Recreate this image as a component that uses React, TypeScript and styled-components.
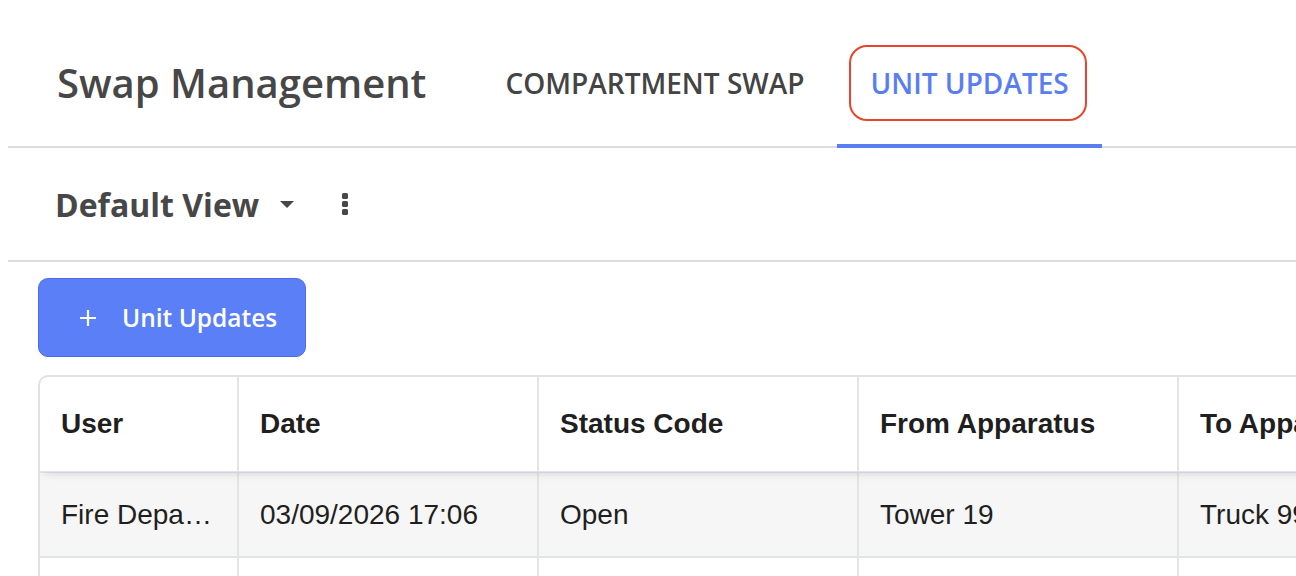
import React from 'react'
import styled, { createGlobalStyle } from 'styled-components'

const GlobalStyle = createGlobalStyle`
  html, body {
    margin: 0;
    padding: 0;
    background: #fff;
  }
  body {
    font-family: "Open Sans", "Liberation Sans", sans-serif;
    overflow: hidden;
  }
`

const Page = styled.main`
  width: 1296px;
  height: 576px;
  padding-left: 8px;
  box-sizing: border-box;
  overflow: hidden;
`

const Header = styled.header`
  display: flex;
  align-items: stretch;
  height: 146px;
  border-bottom: 2px solid #dcdcdc;
`

const Title = styled.h1`
  margin: 56px 46px 0 49px;
  align-self: flex-start;
  font-size: 40px;
  line-height: 1.362;
  font-weight: 600;
  color: #474747;
`

const Tabs = styled.nav`
  display: flex;
  align-items: stretch;
`

const Tab = styled.button<{ $active?: boolean }>`
  display: flex;
  align-items: flex-start;
  padding: 45px 15px 0 12px;
  margin-bottom: -2px;
  background: none;
  border: none;
  border-bottom: 4px solid ${(p) => (p.$active ? '#5a7ef2' : 'transparent')};
  font-family: inherit;
  font-size: 28px;
  font-weight: 600;
  color: ${(p) => (p.$active ? '#5a7ef2' : '#444')};
  cursor: pointer;
`

const TabLabel = styled.span<{ $focused?: boolean }>`
  display: flex;
  align-items: center;
  height: 72px;
  padding: 0 16px 0 19px;
  border: 2px solid ${(p) => (p.$focused ? '#e8442c' : 'transparent')};
  border-radius: 18px;
`

const ViewBar = styled.section`
  display: flex;
  align-items: center;
  height: 112px;
  padding-left: 47px;
  border-bottom: 2px solid #dcdcdc;
`

const ViewName = styled.button`
  display: flex;
  align-items: center;
  gap: 21px;
  background: none;
  border: none;
  padding: 0;
  font-family: inherit;
  font-size: 32px;
  font-weight: 700;
  color: #474747;
  cursor: pointer;
`

const IconButton = styled.button`
  display: flex;
  align-items: center;
  justify-content: center;
  margin-left: 43px;
  width: 16px;
  height: 32px;
  padding: 0;
  background: none;
  border: none;
  color: #474747;
`

const Content = styled.section`
  padding: 16px 0 0 30px;
`

const PrimaryButton = styled.button`
  display: flex;
  align-items: center;
  gap: 26px;
  width: 268px;
  height: 79px;
  padding: 0 0 0 41px;
  box-sizing: border-box;
  background: #5b7ff6;
  border: 1px solid #4b6cdf;
  border-radius: 10px;
  color: #fff;
  font-family: inherit;
  font-size: 24.5px;
  font-weight: 600;
  cursor: pointer;
`

const TableWrap = styled.div`
  margin-top: 18px;
  border: 2px solid #e2e2e2;
  border-right: none;
  border-radius: 10px 0 0 0;
  overflow: hidden;
  width: 1400px;
`

const Table = styled.table<{ $w: number }>`
  width: ${(p) => p.$w}px;
  border-collapse: collapse;
  table-layout: fixed;
  font-family: "Liberation Sans", Arial, sans-serif;
  color: #1f1f1f;
`

const HeadRow = styled.tr`
  height: 95px;
  box-shadow: 0 6px 8px -4px rgba(0, 0, 0, 0.12);
  position: relative;
`

const Th = styled.th<{ $w: number }>`
  width: ${(p) => p.$w}px;
  box-sizing: border-box;
  padding: 0 21px;
  text-align: left;
  font-size: 28px;
  font-weight: 700;
  border-left: 2px solid #e4e4e4;
  white-space: nowrap;
  overflow: hidden;
  &:first-child {
    border-left: none;
  }
`

const Row = styled.tr<{ $shaded?: boolean }>`
  height: 85px;
  background: ${(p) => (p.$shaded ? '#f6f6f6' : '#fff')};
  border-top: 2px solid #e1e4ea;
`

const Td = styled.td`
  padding: 0 21px;
  font-size: 28px;
  white-space: nowrap;
  overflow: hidden;
  text-overflow: ellipsis;
  border-left: 2px solid #e4e4e4;
  &:first-child {
    border-left: none;
  }
`

const columns = [
  { label: 'User', width: 198 },
  { label: 'Date', width: 300 },
  { label: 'Status Code', width: 320 },
  { label: 'From Apparatus', width: 320 },
  { label: 'To Apparatus', width: 260 },
]

const tableWidth = columns.reduce((sum, c) => sum + c.width, 0)

const rows = [
  ['Fire Department', '03/09/2026 17:06', 'Open', 'Tower 19', 'Truck 99'],
  ['Fire Department', '03/08/2026 09:42', 'Closed', 'Engine 4', 'Engine 12'],
  ['Fire Department', '03/07/2026 14:15', 'Open', 'Rescue 2', 'Tower 7'],
]

function Caret() {
  return (
    <svg width="14" height="7" viewBox="0 0 14 7" fill="currentColor">
      <path d="M0 0h14L7 7z" />
    </svg>
  )
}

function Kebab() {
  return (
    <svg width="8" height="24" viewBox="0 0 8 24" fill="currentColor">
      <rect x="1" y="1" width="6" height="6" rx="1.5" />
      <rect x="1" y="9" width="6" height="6" rx="1.5" />
      <rect x="1" y="17" width="6" height="6" rx="1.5" />
    </svg>
  )
}

function Plus() {
  return (
    <svg width="16" height="16" viewBox="0 0 16 16" stroke="currentColor" strokeWidth="2.2">
      <path d="M8 0v16M0 8h16" />
    </svg>
  )
}

function App() {
  return (
    <Page>
      <GlobalStyle />
      <Header>
        <Title>Swap Management</Title>
        <Tabs>
          <Tab type="button">
            <TabLabel>COMPARTMENT SWAP</TabLabel>
          </Tab>
          <Tab type="button" $active>
            <TabLabel $focused>UNIT UPDATES</TabLabel>
          </Tab>
        </Tabs>
      </Header>
      <ViewBar>
        <ViewName type="button">
          Default View
          <Caret />
        </ViewName>
        <IconButton type="button" aria-label="More options">
          <Kebab />
        </IconButton>
      </ViewBar>
      <Content>
        <PrimaryButton type="button">
          <Plus />
          Unit Updates
        </PrimaryButton>
        <TableWrap>
          <Table $w={tableWidth}>
            <thead>
              <HeadRow>
                {columns.map((c) => (
                  <Th key={c.label} $w={c.width}>
                    {c.label}
                  </Th>
                ))}
              </HeadRow>
            </thead>
            <tbody>
              {rows.map((r, i) => (
                <Row key={i} $shaded={i === 0}>
                  {r.map((cell, j) => (
                    <Td key={j}>{cell}</Td>
                  ))}
                </Row>
              ))}
            </tbody>
          </Table>
        </TableWrap>
      </Content>
    </Page>
  )
}

export default App
